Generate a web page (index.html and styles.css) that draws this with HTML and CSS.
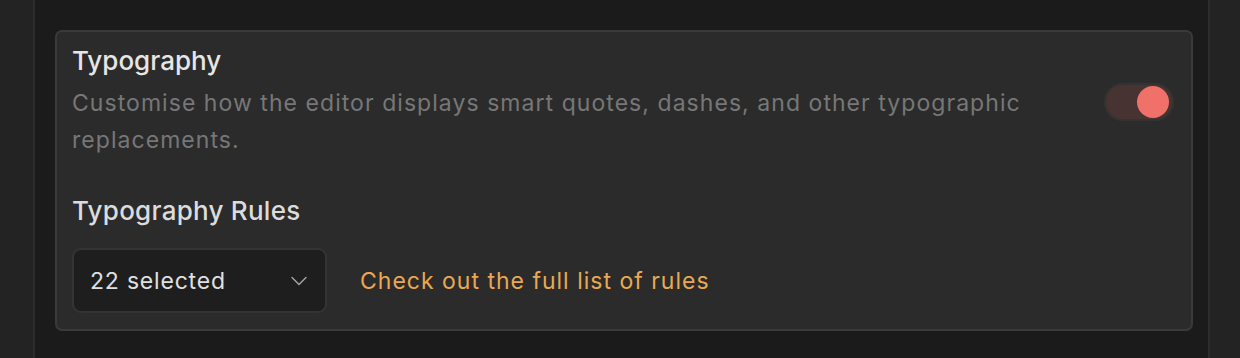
FILE: index.html
```html
<!DOCTYPE html>
<html lang="en">
<head>
    <meta charset="UTF-8">
    <meta name="viewport" content="width=device-width, initial-scale=1.0">
    <title>Typography settings</title>
    <link rel="stylesheet" href="styles.css">
</head>
<body>
    <div class="layout">
        <aside class="side side-left"></aside>

        <main class="content">
            <section class="card">
                <div class="setting-row">
                    <div class="setting-info">
                        <h2 class="setting-title">Typography</h2>
                        <p class="setting-desc">Customise how the editor displays smart quotes, dashes, and other typographic replacements.</p>
                    </div>
                    <button class="toggle on" id="toggle" aria-label="Toggle typography">
                        <span class="knob"></span>
                    </button>
                </div>

                <h3 class="rules-title">Typography Rules</h3>
                <div class="rules-row">
                    <button class="select">
                        <span>22 selected</span>
                        <svg class="chevron" width="16" height="10" viewBox="0 0 16 10">
                            <path d="M1 1.5 L8 8.5 L15 1.5" fill="none" stroke="#a8a8a8" stroke-width="1.4" stroke-linecap="round" stroke-linejoin="round"/>
                        </svg>
                    </button>
                    <a class="rules-link" href="#">Check out the full list of rules</a>
                </div>
            </section>
        </main>

        <aside class="side side-right"></aside>
    </div>

    <script>
        // Toggle on/off
        document.getElementById('toggle').addEventListener('click', function() {
            this.classList.toggle('on');
        });
    </script>
</body>
</html>
```

FILE: styles.css
```css
body {
    margin: 0;
    padding: 0;
    background: #1b1b1b;
    font-family: 'Inter', 'Noto Sans', sans-serif;
    overflow: hidden;
}

.layout {
    display: flex;
    height: 358px;
}

.side {
    background-color: #232323;
    flex-shrink: 0;
}

.side-left {
    width: 33px;
    border-right: 2px solid #2c2c2c;
}

.side-right {
    width: 30px;
    border-left: 2px solid #2c2c2c;
}

.content {
    flex: 1;
    padding: 30px 15px 0 20px;
}

.card {
    background-color: #2b2b2b;
    border: 2px solid #3a3a3a;
    border-radius: 7px;
    padding: 13px 17px 0 15px;
    height: 301px;
    box-sizing: border-box;
}

.setting-row {
    display: flex;
    align-items: center;
    gap: 40px;
}

.setting-info {
    flex: 1;
}

.setting-title {
    margin: 0;
    color: #e6e6e6;
    font-size: 26px;
    font-weight: 500;
    line-height: 32px;
}

.setting-desc {
    margin: 8px 0 0;
    color: #777;
    font-size: 23px;
    line-height: 37px;
    letter-spacing: 1.05px;
}

.toggle {
    width: 70px;
    height: 38px;
    border-radius: 19px;
    border: 2px solid #333;
    background-color: #3a2e2d;
    padding: 0 3px;
    display: flex;
    align-items: center;
    justify-content: flex-start;
    cursor: pointer;
    flex-shrink: 0;
    box-sizing: border-box;
}

.toggle.on {
    background-color: #473331;
    justify-content: flex-end;
}

.knob {
    width: 32px;
    height: 32px;
    border-radius: 50%;
    background-color: #f07169;
    flex-shrink: 0;
}

.rules-title {
    margin: 36px 0 0;
    color: #dcdcdc;
    font-size: 26px;
    font-weight: 500;
    line-height: 32px;
    letter-spacing: 0.25px;
}

.rules-row {
    display: flex;
    align-items: center;
    gap: 33px;
    margin-top: 21px;
}

.select {
    width: 255px;
    height: 65px;
    background-color: #1e1e1e;
    border: 2px solid #343434;
    border-radius: 9px;
    padding: 0 18px 0 16px;
    display: flex;
    align-items: center;
    justify-content: space-between;
    color: #e0e0e0;
    font-family: inherit;
    font-size: 23px;
    letter-spacing: 0.8px;
    cursor: pointer;
    box-sizing: border-box;
}

.chevron {
    flex-shrink: 0;
}

.rules-link {
    color: #eaa853;
    font-size: 23px;
    letter-spacing: 1px;
    text-decoration: none;
}
```
